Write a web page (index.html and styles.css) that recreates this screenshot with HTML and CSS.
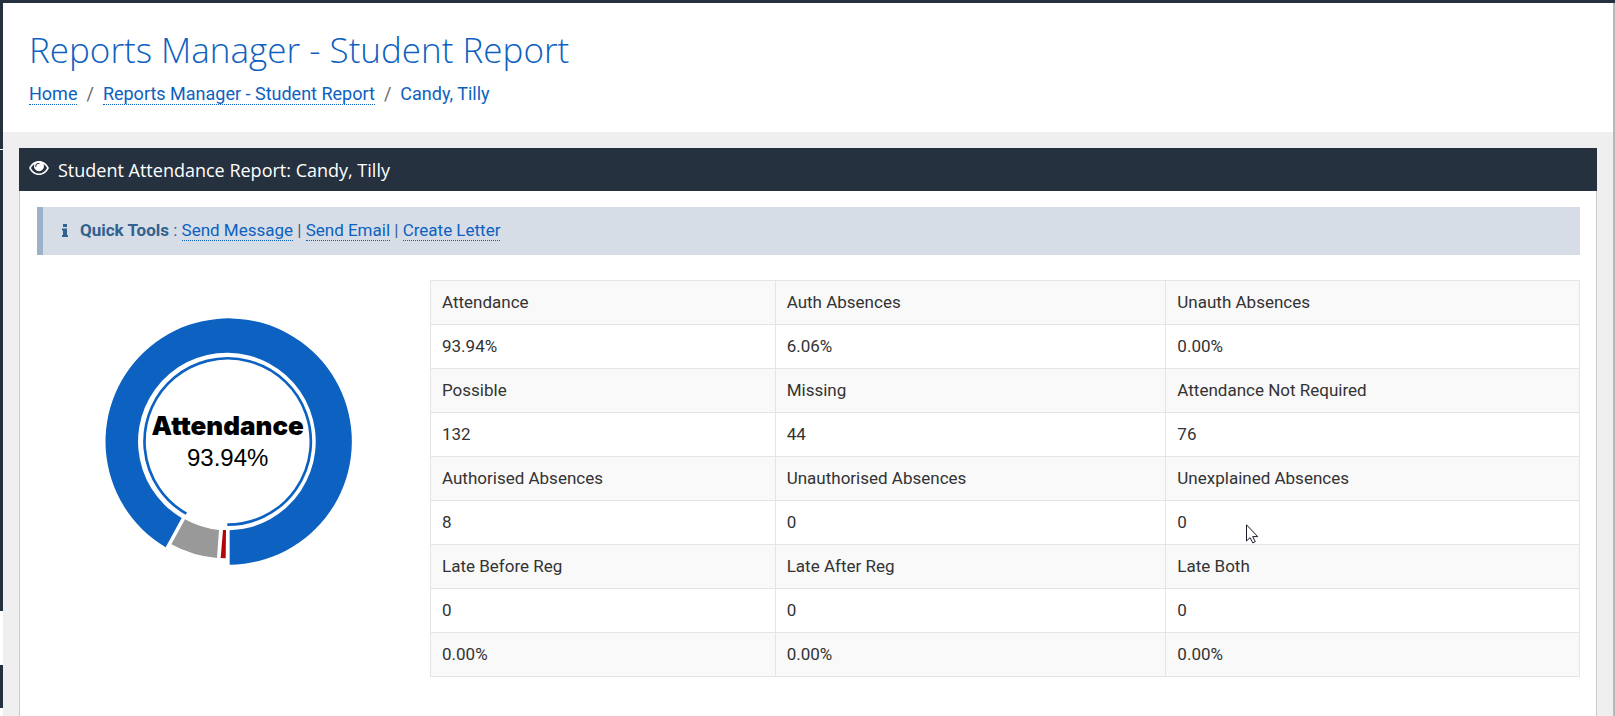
FILE: index.html
```html
<!DOCTYPE html>
<html lang="en">
<head>
<meta charset="utf-8">
<title>Reports Manager - Student Report</title>
<link rel="stylesheet" href="styles.css">
</head>
<body>
<div class="topbar"></div>
<div class="shell">
  <aside class="sidebar"><div class="side-item"></div><div class="side-menu"></div><div class="side-gap"></div><div class="side-foot"></div></aside>
  <main class="main">
    <header class="page-head">
      <h1 class="title">Reports Manager - Student Report</h1>
      <nav aria-label="Breadcrumb">
        <ol class="crumbs">
          <li><a class="link" href="#">Home</a></li>
          <li><a class="link" href="#">Reports Manager - Student Report</a></li>
          <li>Candy, Tilly</li>
        </ol>
      </nav>
    </header>
    <section class="panel">
      <h2 class="panel-head">
        <svg class="eye" viewBox="0 0 20 14" aria-hidden="true"><path fill="#fff" fill-rule="evenodd" d="M10 0C5.800 0 2.200 2.500 0 7c2.200 4.500 5.800 7 10 7s7.800-2.500 10-7C17.800 2.500 14.200 0 10 0zM10 12.500C6.600 12.500 3.600 10.500 1.900 7 2.800 5.300 4 4 5.500 3A5 5 0 1 0 14.500 3C16 4 17.200 5.300 18.100 7 16.400 10.500 13.400 12.500 10 12.500zM10 1.900q.6 0 .6.500T10 2.900A2.500 2.500 0 0 0 7.300 5.500q0 .5-.5.500T6.300 5.500A3.600 3.600 0 0 1 10 1.900z"/></svg>
        <span>Student Attendance Report: Candy, Tilly</span>
      </h2>
      <div class="panel-body">
        <div class="tools">
          <svg class="info" viewBox="0 0 6 13" aria-hidden="true"><path fill="#31618f" d="M1 0h4v3H1zM0 4.500h5V11h1v2H0v-2h1V6.500H0z"/></svg>
          <p class="tools-text"><strong>Quick Tools</strong> : <a class="link" href="#">Send Message</a> | <a class="link" href="#">Send Email</a> | <a class="link" href="#">Create Letter</a></p>
        </div>
        <div class="content">
          <svg class="chart" viewBox="0 0 900 900" role="img" aria-label="Attendance 93.94%">
            <path fill="#0d61c0" d="M452 824A369.500 369.500 0 1 0 260 772L308 684A266.500 266.500 0 1 1 452 721z"/>
            <path fill="none" stroke="#0d61c0" stroke-width="8" d="M445 704A249.500 249.500 0 1 0 322 671"/>
            <path fill="#999" d="M318 688Q366 715 420 720L414 804Q341 798 277 763z"/>
            <path fill="#b30505" d="M432 720h9l-1 85-15-1z"/>
            <text class="chart-name" x="446" y="435">Attendance</text>
            <text class="chart-value" x="446" y="528">93.94%</text>
          </svg>
          <table class="stats">
            <colgroup><col class="col-a"><col class="col-b"><col class="col-c"></colgroup>
            <tbody>
              <tr><td>Attendance</td><td>Auth Absences</td><td>Unauth Absences</td></tr>
              <tr><td>93.94%</td><td>6.06%</td><td>0.00%</td></tr>
              <tr><td>Possible</td><td>Missing</td><td>Attendance Not Required</td></tr>
              <tr><td>132</td><td>44</td><td>76</td></tr>
              <tr><td>Authorised Absences</td><td>Unauthorised Absences</td><td>Unexplained Absences</td></tr>
              <tr><td>8</td><td>0</td><td>0</td></tr>
              <tr><td>Late Before Reg</td><td>Late After Reg</td><td>Late Both</td></tr>
              <tr><td>0</td><td>0</td><td>0</td></tr>
              <tr><td>0.00%</td><td>0.00%</td><td>0.00%</td></tr>
            </tbody>
          </table>
        </div>
      </div>
    </section>
  </main>
  <div class="edge"></div>
</div>
<svg class="cursor" viewBox="0 0 13 20" aria-hidden="true"><path fill="#fff" stroke="#1b1b2b" d="M.5.800V17l3.600-3.400 2.700 5.300 2.500-1.200-2.600-5.100h5z"/></svg>
</body>
</html>
```
FILE: styles.css
```css
* { box-sizing: border-box; }
body {
  margin: 0;
  min-height: 100vh;
  display: flex;
  flex-direction: column;
  background: #efefef;
  color: #333;
  font: 17px/23px Roboto, "Liberation Sans", sans-serif;
}
.topbar { height: 3px; background: #25313e; }
.shell { flex: 1; display: flex; }
.sidebar { width: 3px; display: flex; flex-direction: column; background: #fff; }
.side-item { height: 147px; background: #25313e; border-bottom: 1px solid #fff; }
.side-menu { flex: 1; background: #25313e; }
.side-gap { height: 54px; }
.side-foot { height: 51px; background: #25313e; border-bottom: 8px solid #fff; }
.edge { width: 2px; background: #b8b8b8; }
.main { flex: 1; min-width: 0; display: flex; flex-direction: column; }
.page-head { padding: 22px 26px 27px; background: #fff; color: #0d61c0; }
.title {
  margin: 0 0 7px;
  font: 300 35px/50px "Open Sans", sans-serif;
}
.crumbs { display: flex; margin: 0; padding: 0; list-style: none; font-size: 18px; }
.crumbs li + li::before { content: "/"; padding: 0 9px; color: #666; }
.link { color: #0d61c0; text-decoration: none; border-bottom: 1px dotted #0d61c0; }
.panel { flex: 1; display: flex; flex-direction: column; margin: 16px 16px 0; }
.panel-head {
  display: flex;
  align-items: center;
  gap: 9px;
  margin: 0;
  padding: 11px 10px 9px;
  background: #25313e;
  color: #fff;
  font: 400 18px/23px "Open Sans", sans-serif;
}
.eye { width: 20px; height: 14px; margin-bottom: 5px; }
.panel-body { flex: 1; padding: 16px 16px 35px 17px; background: #fff; border: solid #ccc; border-width: 0 1px; }
.tools {
  display: flex;
  align-items: center;
  gap: 12px;
  padding: 12px 19px 13px;
  background: #d6dde7;
  border-left: 6px solid #9cb2c8;
  color: #31618f;
}
.info { width: 6px; height: 13px; }
.tools-text { margin: 0; }
.content { display: flex; align-items: flex-start; padding-top: 25px; }
.chart { width: 300px; height: 300px; flex: none; margin: 10px 51px 0 42px; }
.chart text { text-anchor: middle; fill: #000; }
.chart-name { font: 900 78px Inter, sans-serif; }
.chart-value { font: 72px "Liberation Sans", sans-serif; }
.stats { flex: 1; width: 100%; table-layout: fixed; border-collapse: collapse; border: 1px solid #e5e5e5; }
.stats td { padding: 10px 11px; border: 1px solid #e5e5e5; }
.stats tr:nth-child(odd) { background: #f9f9f9; }
.col-a { width: 30%; }
.col-b { width: 34%; }
.col-c { width: 36%; }
.cursor { position: absolute; left: 1246px; top: 524px; width: 13px; height: 20px; }
```
